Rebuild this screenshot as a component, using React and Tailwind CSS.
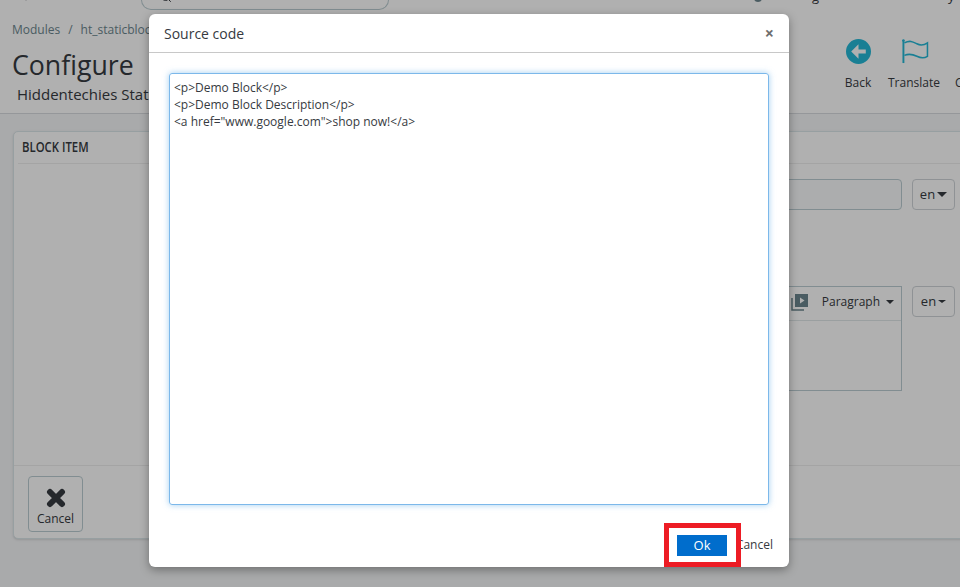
import { ChevronLeft, Search } from 'lucide-react';

function Dropdown({ caret }) {
  return (
    <div className="w-[43px] h-[31px] flex items-center justify-center gap-[2px] border border-[#cfd4d8] rounded text-[13px] text-[#363a41]">
      en
      <span className={caret} />
    </div>
  );
}

export default function App() {
  return (
    <div className="relative w-[960px] h-[587px] overflow-hidden bg-[#f5f6f8] font-['Open_Sans',sans-serif] text-[#363a41]">
      {/* Page behind the dialog */}
      <header className="h-[114px] bg-white border-b border-[#d8dbdf] relative overflow-hidden">
        <div className="h-[10px] flex items-start">
          <div className="w-[141px] h-[3px] overflow-hidden pl-[18px]">
            <ChevronLeft className="w-3 h-3 -mt-[9px]" />
          </div>
          <div className="w-[248px] h-[10px] bg-white border border-t-0 border-[#bbcdd2] rounded-b-[16px] pl-[18px] overflow-hidden">
            <Search className="w-3 h-3 -mt-[9px]" />
          </div>
          <div className="relative flex-1 h-[4px] overflow-hidden">
            <span className="absolute left-[365px] -top-[6px] w-[8px] h-[8px] rounded-full bg-[#6c868e]" />
            <span className="absolute left-[423px] -top-[13px] text-[13px] leading-[18px]">g</span>
            <span className="absolute left-[559px] -top-[13px] text-[13px] leading-[18px]">y</span>
          </div>
        </div>
        <div className="pl-[12px] pt-[12px] text-[12px] leading-[16px] text-[#6c868e] flex gap-[8px]">
          <span>Modules</span>
          <span>/</span>
          <span>ht_staticblock</span>
        </div>
        <h1 className="pl-[12px] mt-[8px] text-[26.7px] leading-[38px] text-[#363a41]">Configure</h1>
        <p className="pl-[17px] mt-[1px] text-[15px] leading-[18px] whitespace-nowrap">Hiddentechies Static Block</p>
        <div className="absolute left-[834px] top-[39px] flex text-[12px] whitespace-nowrap">
          <div className="w-[48px] flex flex-col items-center gap-[10px]">
            <svg viewBox="0 0 24 24" className="w-[25px] h-[25px] text-[#25b9d7]" fill="currentColor">
              <path d="M12 0a12 12 0 1 0 0 24 12 12 0 0 0 0-24zm7 14h-7v5l-7-7 7-7v5h7z" fillRule="evenodd" />
            </svg>
            <span>Back</span>
          </div>
          <div className="ml-[6px] w-[52px] flex flex-col items-center gap-[10px]">
            <svg viewBox="0 0 30 26" className="w-[30px] h-[25px] text-[#25b9d7]" fill="none" stroke="currentColor" strokeWidth="1.6">
              <circle cx="4" cy="1.5" r="1.3" fill="currentColor" stroke="none" />
              <path d="M4 1v24" strokeWidth="2" />
              <path d="M5 4c6-3 9-1 13 1s8 1 11-1v14c-3 2-7 2-11 0s-8-3-13-1" />
            </svg>
            <span>Translate</span>
          </div>
          <div className="ml-[15px] pt-[35px]">Close</div>
        </div>
      </header>

      <div className="px-[13px] pt-[17px]">
        <div className="w-[1000px] h-[408px] bg-white border border-[#dbe6e9] rounded-[5px] shadow-sm flex flex-col">
          <div className="mx-[4px] px-[4px] h-[32px] pb-[2px] border-b border-[#eeeeee] flex items-center text-[14px] font-semibold">
            <span className="origin-left scale-x-[0.81] whitespace-nowrap">BLOCK ITEM</span>
          </div>
          <div className="flex-1 relative">
            <div className="absolute left-[700px] top-[15px] w-[188px] h-[31px] bg-[#fafbfc] border border-[#bbcdd2] rounded" />
            <div className="absolute left-[898px] top-[15px]">
              <Dropdown caret="w-0 h-0 border-x-[5px] border-x-transparent border-t-[5px] border-t-[#363a41]" />
            </div>
            <div className="absolute left-[700px] top-[122px] w-[188px] h-[105px] border border-[#bbcdd2]">
              <div className="h-[34px] pb-[3px] border-b border-[#dfe6e8] flex items-center justify-end pr-[7px] text-[12px]">
                <svg viewBox="0 0 18 18" className="w-[18px] h-[18px] mr-[13px]">
                  <path d="M1 5v12h12" fill="none" stroke="#6c868e" strokeWidth="1.5" />
                  <rect x="4" y="1" width="13" height="13" fill="#6c868e" />
                  <path d="M9 4.5l4.5 3-4.5 3z" fill="#fff" />
                </svg>
                Paragraph
                <span className="ml-[6px] w-0 h-0 border-x-[4px] border-x-transparent border-t-[4px] border-t-[#363a41]" />
              </div>
            </div>
            <div className="absolute left-[898px] top-[122px]">
              <Dropdown caret="w-0 h-0 border-x-[4px] border-x-transparent border-t-[3px] border-t-[#363a41]" />
            </div>
          </div>
          <div className="h-[73px] border-t border-[#eeeeee] pl-[14px] pt-[10px]">
            <button className="w-[55px] h-[56px] border border-[#bbcdd2] rounded flex flex-col items-center pt-[11px] text-[12px] leading-[16px]">
              <svg viewBox="0 0 20 20" className="w-[20px] h-[20px]" fill="none" stroke="#363a41" strokeWidth="6" strokeLinecap="round">
                <path d="M4 4l12 12M16 4L4 16" />
              </svg>
              <span className="mt-[3px]">Cancel</span>
            </button>
          </div>
        </div>
      </div>

      {/* Backdrop */}
      <div className="absolute inset-0 bg-black/[0.31]" />

      {/* Dialog */}
      <div className="absolute left-[149px] top-[14px] w-[640px] h-[553px] bg-white rounded-[6px] shadow-[0_3px_10px_rgba(0,0,0,0.35)] flex flex-col">
        <div className="h-[39px] shrink-0 border-b border-[#c8c8c8] flex items-center justify-between px-[15px] text-[14px] text-[#363a41]">
          <span>Source code</span>
          <span className="text-[16px] font-bold text-[#6d6d6d] leading-none">×</span>
        </div>
        <div className="flex-1 px-[20px] pt-[20px]">
          <div className="h-[432px] border border-[#7cb8ea] rounded-[3px] shadow-[0_0_6px_rgba(102,175,233,0.6)] px-[4px] pt-[5px] text-[12px] leading-[17px] text-[#363a41] whitespace-pre">
            <p>{'<p>Demo Block</p>'}</p>
            <p>{'<p>Demo Block Description</p>'}</p>
            <p>{'<a href="www.google.com">shop now!</a>'}</p>
          </div>
        </div>
        <div className="h-[62px] shrink-0 relative flex items-start justify-end pr-[16px] pt-[30px] text-[12px] leading-[20px]">
          <span>Cancel</span>
          <div className="absolute left-[515px] top-[18px] w-[77px] h-[44px] border-[5px] border-[#ed1c24] bg-white flex items-center justify-center">
            <button className="w-[50px] h-[21px] mt-[1px] mr-[1px] bg-[#006dcc] text-white text-[13px] leading-[21px]">Ok</button>
          </div>
        </div>
      </div>
    </div>
  );
}
